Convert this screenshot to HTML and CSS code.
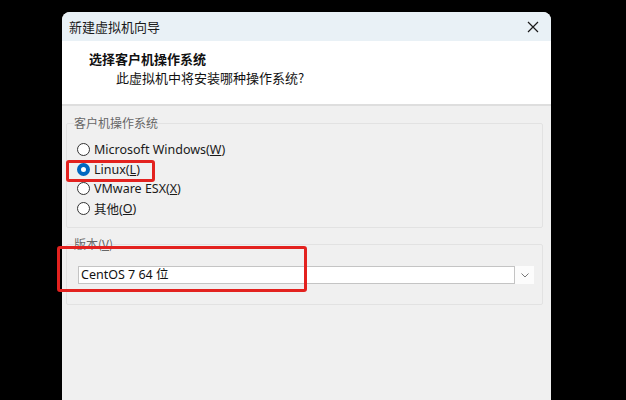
FILE: index.html
```html
<!DOCTYPE html>
<html lang="zh-CN">
  <head>
    <meta charset="UTF-8" />
    <meta name="viewport" content="width=device-width, initial-scale=1.0" />
    <title>新建虚拟机向导</title>
    <link rel="stylesheet" href="styles.css">
  </head>
  <body>
    <div class="window">
      <!-- Title bar -->
      <div class="titlebar">
        <span class="title">新建虚拟机向导</span>
        <span class="close">
          <svg width="12" height="12" viewBox="0 0 12 12">
            <path d="M1 1 L11 11 M11 1 L1 11" stroke="#1a1a1a" stroke-width="1.2" fill="none" />
          </svg>
        </span>
      </div>

      <!-- Wizard header -->
      <div class="header">
        <div class="header-title">选择客户机操作系统</div>
        <div class="header-sub">此虚拟机中将安装哪种操作系统?</div>
      </div>

      <div class="content">
        <!-- Guest OS group -->
        <fieldset class="group os-group">
          <legend>客户机操作系统</legend>
          <label class="radio"><span class="dot"></span>Microsoft Windows(<u>W</u>)</label>
          <label class="radio checked"><span class="dot"></span>Linux(<u>L</u>)</label>
          <label class="radio"><span class="dot"></span>VMware ESX(<u>X</u>)</label>
          <label class="radio"><span class="dot"></span>其他(<u>O</u>)</label>
        </fieldset>

        <!-- Version group -->
        <fieldset class="group version-group">
          <legend>版本(<u>V</u>)</legend>
          <div class="combo">
            <div class="combo-field">CentOS 7 64 位</div>
            <div class="combo-btn">
              <svg width="8" height="5" viewBox="0 0 8 5">
                <path d="M0.5 0.5 L4 4 L7.5 0.5" stroke="#777" stroke-width="1" fill="none" />
              </svg>
            </div>
          </div>
        </fieldset>
      </div>
    </div>

    <!-- Red highlight marks -->
    <div class="mark mark-linux"></div>
    <div class="mark mark-version"></div>
  </body>
</html>
```

FILE: styles.css
```css
body {
  margin: 0;
  padding: 0;
  background: #000;
  height: 400px;
  overflow: hidden;
  position: relative;
  font-family: "Noto Sans", "Noto Sans CJK SC", sans-serif;
}
.window {
  margin: 12px 0 0 62px;
  width: 489px;
  height: 400px;
  background: #f0f0f0;
  border-radius: 8px 8px 0 0;
  overflow: hidden;
}
/* Title bar */
.titlebar {
  height: 29px;
  background: #e9f1f6;
  display: flex;
  align-items: center;
  justify-content: space-between;
  padding-left: 7px;
}
.title {
  font-family: "Noto Sans CJK SC", sans-serif;
  font-size: 13px;
  color: #1a1a1a;
}
.close {
  width: 36px;
  height: 29px;
  display: flex;
  align-items: center;
  justify-content: center;
}
/* Header */
.header {
  height: 55px;
  padding: 8px 0 0 27px;
  background: #fff;
  border-bottom: 2px solid #dedede;
  font-family: "Noto Sans CJK SC", sans-serif;
  color: #111;
}
.header-title {
  font-size: 13px;
  font-weight: bold;
  line-height: 19px;
}
.header-sub {
  font-size: 13px;
  line-height: 19px;
  padding-left: 27px;
}
/* Content area */
.content {
  padding: 0 8px 0 4px;
}
.group {
  margin: 0;
  border: 1px solid #e2e2e2;
  border-radius: 2px;
}
.group legend {
  font-family: "Noto Sans CJK SC", sans-serif;
  font-size: 12px;
  line-height: 16px;
  color: #666;
  padding: 0;
}
.os-group {
  margin-top: 9px;
  padding: 9px 10px 9px 10px;
}
.os-group legend {
  margin-left: -3px;
}
.radio {
  display: flex;
  align-items: center;
  height: 19.5px;
  font-size: 12.5px;
  color: #1a1a1a;
}
.dot {
  width: 11px;
  height: 11px;
  border: 1px solid #333;
  border-radius: 50%;
  margin-right: 4px;
  background: #fff;
  box-sizing: content-box;
}
.checked .dot {
  width: 5px;
  height: 5px;
  border: 4px solid #0067c0;
}
.version-group {
  margin-top: 8px;
  padding: 14px 8px 20px 11px;
}
.version-group legend {
  margin-left: -4px;
}
.combo {
  display: flex;
  height: 18px;
}
.combo-field {
  flex: 1;
  background: #fff;
  border: 1px solid #c4c4c4;
  font-size: 12.5px;
  line-height: 16px;
  padding-left: 2px;
  color: #111;
}
.combo-btn {
  width: 19px;
  background: #fcfcfc;
  display: flex;
  align-items: center;
  justify-content: center;
}
/* Annotation boxes */
.mark {
  position: absolute;
  border: 3px solid #e3221f;
  border-radius: 3px;
  box-sizing: border-box;
}
.mark-linux {
  left: 66px;
  top: 160px;
  width: 89px;
  height: 22px;
}
.mark-version {
  left: 57px;
  top: 246px;
  width: 250px;
  height: 46px;
}
```
